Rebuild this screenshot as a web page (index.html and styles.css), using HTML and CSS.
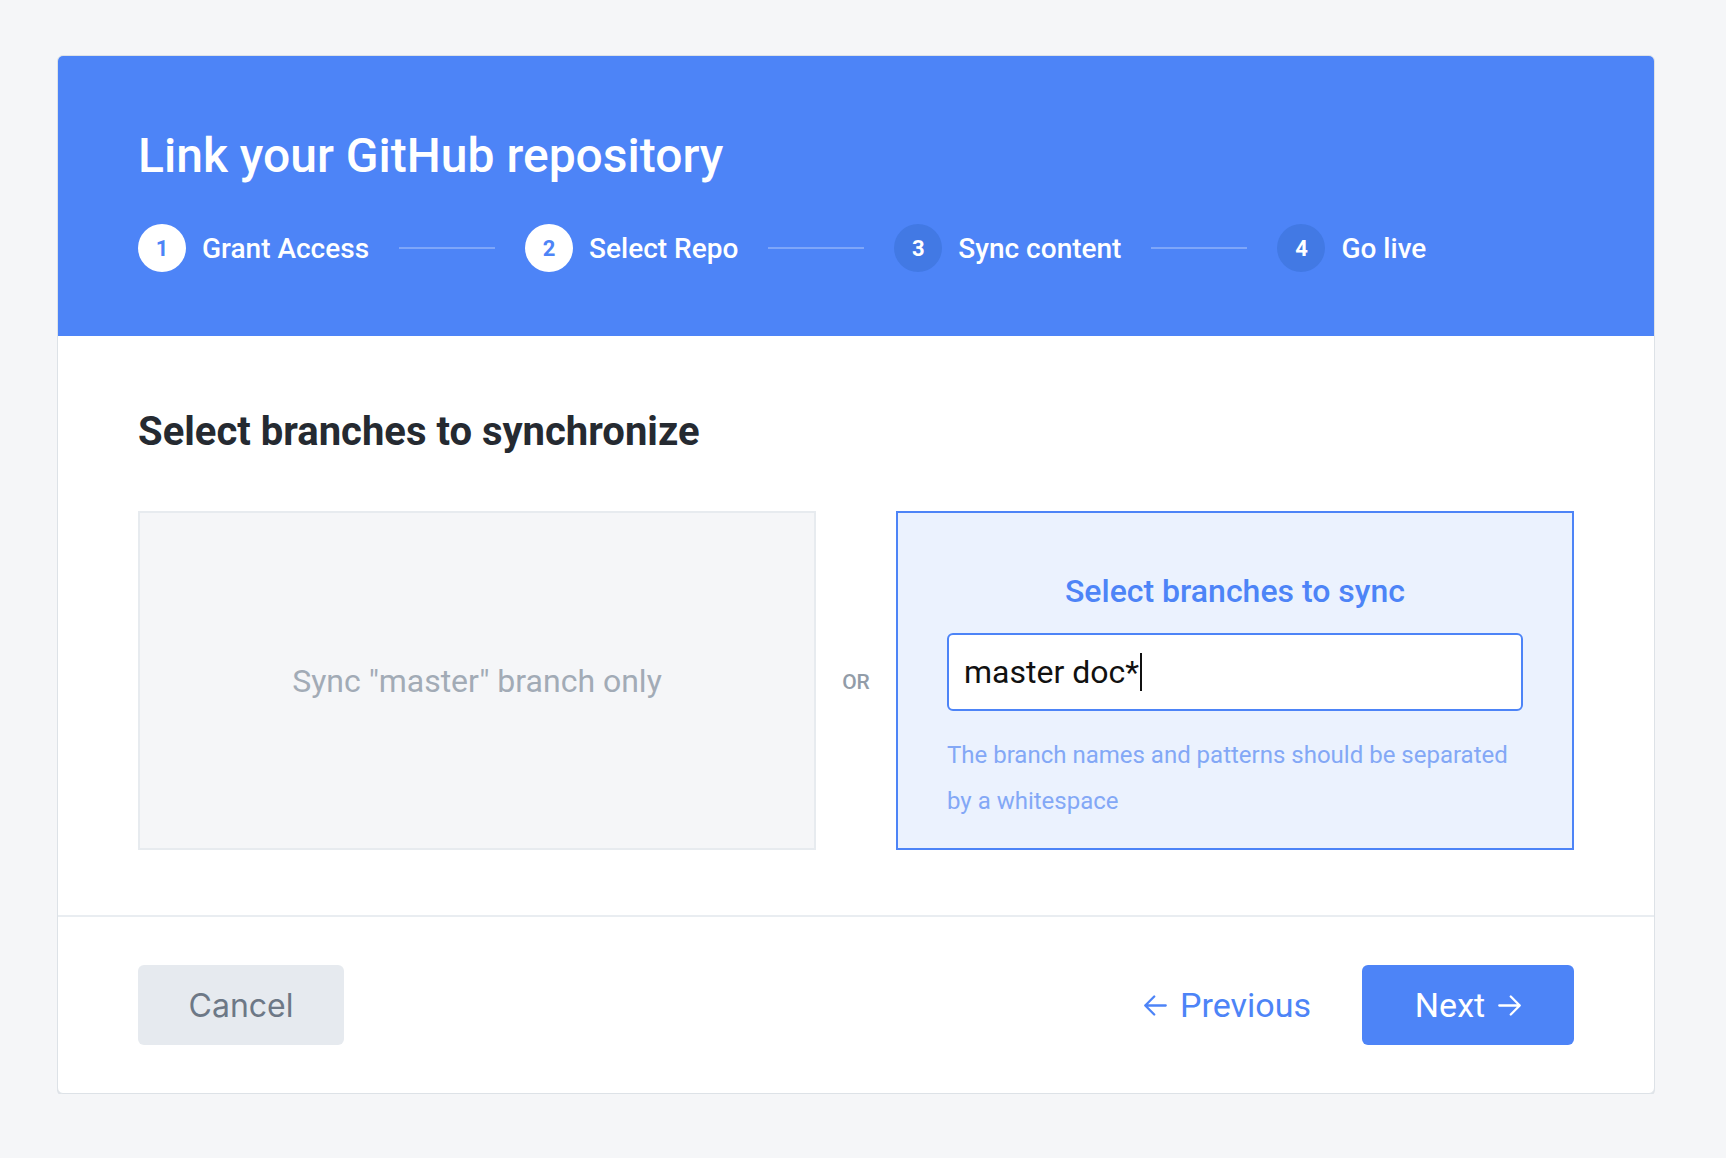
FILE: index.html
```html
<!DOCTYPE html>
<html>
<head>
<meta charset="utf-8">
<link rel="stylesheet" href="styles.css">
</head>
<body>
<div class="card">
  <div class="header">
    <h1 class="title">Link your GitHub repository</h1>
    <div class="steps">
      <div class="step done"><span class="num">1</span><span class="label">Grant Access</span></div>
      <span class="connector"></span>
      <div class="step done"><span class="num">2</span><span class="label">Select Repo</span></div>
      <span class="connector"></span>
      <div class="step"><span class="num">3</span><span class="label">Sync content</span></div>
      <span class="connector"></span>
      <div class="step"><span class="num">4</span><span class="label">Go live</span></div>
    </div>
  </div>
  <div class="body">
    <h2 class="heading">Select branches to synchronize</h2>
    <div class="options">
      <div class="option option-master">Sync "master" branch only</div>
      <div class="or">OR</div>
      <div class="option option-select">
        <div class="option-title">Select branches to sync</div>
        <div class="input"><span class="input-text">master doc*</span><span class="caret"></span></div>
        <p class="hint">The branch names and patterns should be separated by a whitespace</p>
      </div>
    </div>
  </div>
  <div class="footer">
    <button class="btn-cancel">Cancel</button>
    <div class="nav">
      <button class="btn-prev"><svg class="arrow" viewBox="3 3 18 18" width="23" height="23"><path d="M20 12H4M11 5l-7 7 7 7" fill="none" stroke="currentColor" stroke-width="1.8" stroke-linecap="round" stroke-linejoin="round"/></svg><span>Previous</span></button>
      <button class="btn-next"><span>Next</span><svg class="arrow" viewBox="3 3 18 18" width="23" height="23"><path d="M4 12h16M13 5l7 7-7 7" fill="none" stroke="currentColor" stroke-width="1.8" stroke-linecap="round" stroke-linejoin="round"/></svg></button>
    </div>
  </div>
</div>
</body>
</html>
```
FILE: styles.css
```css
html, body {
  margin: 0;
  padding: 0;
}
body {
  background: #f5f6f8;
  font-family: Roboto, "Liberation Sans", sans-serif;
  padding-top: 55px;
  padding-left: 57px;
}
.card {
  width: 1598px;
  box-sizing: border-box;
  background: #fff;
  border: 1px solid #dde2e7;
  border-radius: 6px;
  box-shadow: 0 2px 0 #dfe3e8;
  overflow: hidden;
}
.header {
  background: #4d84f7;
  padding: 72px 80px 64px;
  color: #fff;
}
.title {
  margin: 0;
  font-size: 48px;
  line-height: 56px;
  font-weight: 500;
}
.steps {
  display: flex;
  align-items: center;
  margin-top: 40px;
}
.step {
  display: flex;
  align-items: center;
}
.num {
  width: 48px;
  height: 48px;
  border-radius: 50%;
  background: #4279e4;
  color: #fff;
  display: flex;
  align-items: center;
  justify-content: center;
  font-size: 22px;
  font-weight: 700;
  margin-right: 16px;
}
.step.done .num {
  background: #fff;
  color: #4d84f7;
}
.label {
  font-size: 28px;
  font-weight: 500;
  line-height: 34px;
  padding-top: 2px;
}
.connector {
  width: 96px;
  height: 2px;
  background: rgba(255, 255, 255, 0.28);
  margin: 0 30px;
}
.body {
  padding: 72px 80px 65px;
  border-bottom: 2px solid #e9edf1;
}
.heading {
  margin: 0 0 56px;
  font-size: 40px;
  line-height: 47px;
  font-weight: 700;
  color: #252a31;
}
.options {
  display: grid;
  grid-template-columns: 1fr 80px 1fr;
}
.option {
  box-sizing: border-box;
  border: 2px solid #e7ebef;
  background: #f5f6f8;
}
.option-master {
  display: flex;
  align-items: center;
  justify-content: center;
  font-size: 32px;
  color: #a2abb6;
}
.or {
  display: flex;
  align-items: center;
  justify-content: center;
  font-size: 21px;
  font-weight: 500;
  color: #929ca8;
  padding-top: 2px;
}
.option-select {
  border-color: #4d84f7;
  background: #ebf2fe;
  padding: 58px 49px 24px;
}
.option-title {
  text-align: center;
  font-size: 32px;
  line-height: 40px;
  font-weight: 500;
  color: #4d84f7;
}
.input {
  margin-top: 22px;
  height: 78px;
  box-sizing: border-box;
  background: #fff;
  border: 2px solid #4d84f7;
  border-radius: 6px;
  display: flex;
  align-items: center;
  padding: 0 15px;
}
.input-text {
  font-size: 32px;
  color: #111;
}
.caret {
  width: 2px;
  height: 38px;
  background: #111;
  margin-left: 1px;
}
.hint {
  margin: 21px 0 0;
  font-size: 24px;
  line-height: 46px;
  color: #83a8f6;
}
.footer {
  display: flex;
  justify-content: space-between;
  align-items: center;
  padding: 48px 80px;
}
button {
  border: none;
  cursor: pointer;
  margin: 0;
}
.btn-cancel {
  width: 206px;
  height: 80px;
  border-radius: 6px;
  background: #e6eaef;
  color: #6d7886;
  font-family: Inter, "Open Sans", sans-serif;
  font-size: 32px;
}
.nav {
  display: flex;
  align-items: center;
  gap: 51px;
}
.btn-prev {
  background: none;
  color: #4d84f7;
  font-family: Roboto, sans-serif;
  font-size: 34px;
  display: flex;
  align-items: center;
  gap: 13px;
  padding: 0;
}
.btn-next {
  width: 212px;
  height: 80px;
  border-radius: 6px;
  background: #4d84f7;
  color: #fff;
  font-family: Roboto, sans-serif;
  font-size: 34px;
  display: flex;
  align-items: center;
  justify-content: center;
  gap: 13px;
  padding: 0;
}
.arrow {
  display: block;
}
```
